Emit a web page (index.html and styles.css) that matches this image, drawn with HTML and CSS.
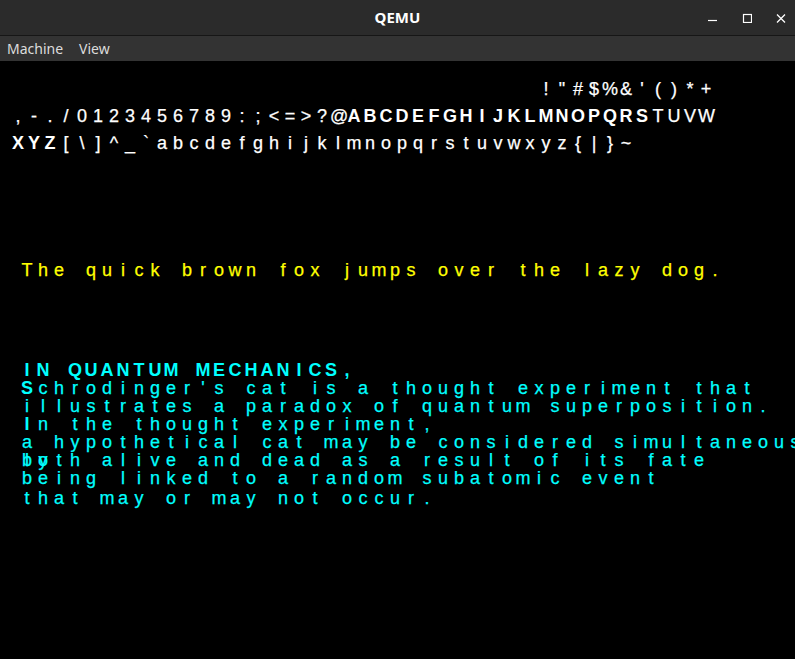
FILE: index.html
```html
<!DOCTYPE html>
<html lang="en">
<head>
<meta charset="utf-8">
<title>QEMU</title>
<link rel="stylesheet" href="styles.css">
</head>
<body>
<div class="window">
  <header class="titlebar">
    <div class="title">QEMU</div>
    <div class="controls">
      <svg class="ctl" width="10" height="10" viewBox="0 0 10 10"><line x1="0" y1="7.5" x2="9" y2="7.5" stroke="#ffffff" stroke-width="1.2"/></svg>
      <svg class="ctl" width="10" height="10" viewBox="0 0 10 10"><rect x="1.5" y="1.5" width="8" height="8" fill="none" stroke="#ffffff" stroke-width="1.2"/></svg>
      <svg class="ctl" width="10" height="10" viewBox="0 0 10 10"><path d="M1 1.5 L9 9.5 M9 1.5 L1 9.5" stroke="#ffffff" stroke-width="1.3" fill="none"/></svg>
    </div>
  </header>
  <nav class="menubar">
    <span class="menu">Machine</span>
    <span class="menu">View</span>
  </nav>
  <main class="screen">
    <section class="charset">
      <div class="line">                                 !"#$%&amp;'()*+</div>
      <div class="line">,-./0123456789:;&lt;=&gt;?@<b>ABCDEFGHIJKLMNOPQRS</b>TUVW</div>
      <div class="line"><b>XYZ</b>[\]^_`abcdefghijklmnopqrstuvwxyz{|}~</div>
    </section>
    <p class="line yellow">The quick brown fox jumps over the lazy dog.</p>
    <section class="cyan">
      <div class="line"><b>IN QUANTUM MECHANICS,</b></div>
      <div class="line"><b>S</b>chrodinger's cat is a thought experiment that</div>
      <div class="line">illustrates a paradox of quantum superposition.</div>
      <div class="line"><b>I</b>n the thought experiment,</div>
      <div class="line">a hypothetical cat may be considered simultaneous</div>
      <div class="line"><span class="over">ly</span>both alive and dead as a result of its fate</div>
      <div class="line">being linked to a random subatomic event</div>
      <div class="line last">that may or may not occur.</div>
    </section>
  </main>
</div>
<script src="script.js"></script>
</body>
</html>
```
FILE: styles.css
```css
* {
  box-sizing: border-box;
  margin: 0;
  padding: 0;
}

html, body {
  width: 795px;
  height: 659px;
  overflow: hidden;
  background: #000000;
}

.window {
  display: flex;
  flex-direction: column;
  height: 659px;
}

.titlebar {
  height: 36px;
  flex: none;
  background: #2b2b2b;
  border-bottom: 1px solid #161616;
  display: grid;
  grid-template-columns: 1fr auto 1fr;
  align-items: center;
}

.title {
  grid-column: 2;
  font: 700 15px/35px "Noto Sans", "DejaVu Sans", sans-serif;
  color: #ffffff;
}

.controls {
  grid-column: 3;
  justify-self: end;
  display: flex;
  gap: 24px;
  padding-right: 9px;
  padding-top: 1px;
}

.ctl {
  display: block;
}

.menubar {
  height: 25px;
  flex: none;
  background: #333333;
  display: flex;
  gap: 16px;
  padding-left: 7px;
  font: 14px/25px "Noto Sans", "DejaVu Sans", sans-serif;
  color: #dcdcdc;
}

.screen {
  flex: 1;
  background: #000000;
  overflow: hidden;
  font-family: "Liberation Sans", Arial, sans-serif;
  font-size: 18px;
  -webkit-text-stroke: 0.25px currentColor;
}

.line {
  white-space: pre;
  position: relative;
}

.cell {
  display: inline-block;
  width: 16px;
  text-align: center;
}

b {
  font-weight: 700;
  -webkit-text-stroke: 0;
}

.charset {
  padding: 15px 0 0 10px;
  color: #ffffff;
}

.charset .line {
  height: 27px;
  line-height: 27px;
}

.yellow {
  color: #ffff00;
  margin-top: 104px;
  padding-left: 19px;
  height: 18px;
  line-height: 18px;
}

.cyan {
  margin-top: 82px;
  padding-left: 19px;
  color: #00ffff;
}

.cyan .line {
  height: 18px;
  line-height: 18px;
}

.cyan .last {
  margin-top: 2px;
}

.over {
  position: absolute;
  left: 0;
  top: 0;
}
```
FILE: script.js
```js
function wrapCells(el) {
  Array.prototype.slice.call(el.childNodes).forEach(function (n) {
    if (n.nodeType === 3) {
      var frag = document.createDocumentFragment();
      Array.from(n.textContent).forEach(function (ch) {
        var s = document.createElement('span');
        s.className = 'cell';
        s.textContent = ch;
        frag.appendChild(s);
      });
      n.parentNode.replaceChild(frag, n);
    } else if (n.nodeType === 1) {
      wrapCells(n);
    }
  });
}
document.querySelectorAll('.line').forEach(wrapCells);
```
